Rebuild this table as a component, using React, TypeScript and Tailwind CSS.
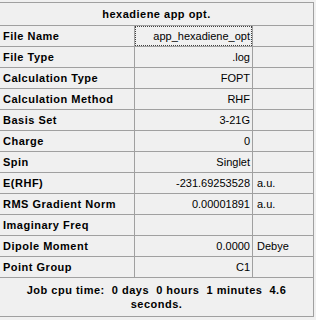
import React from "react";

const rows: { label: string; value: string; unit?: string; focus?: boolean }[] = [
  { label: "File Name", value: "app_hexadiene_opt", focus: true },
  { label: "File Type", value: ".log" },
  { label: "Calculation Type", value: "FOPT" },
  { label: "Calculation Method", value: "RHF" },
  { label: "Basis Set", value: "3-21G" },
  { label: "Charge", value: "0" },
  { label: "Spin", value: "Singlet" },
  { label: "E(RHF)", value: "-231.69253528", unit: "a.u." },
  { label: "RMS Gradient Norm", value: "0.00001891", unit: "a.u." },
  { label: "Imaginary Freq", value: "" },
  { label: "Dipole Moment", value: "0.0000", unit: "Debye" },
  { label: "Point Group", value: "C1" },
];

export default function App() {
  return (
    <div className="w-[316px] h-[320px] bg-[#f0f0f0] pt-[2px] font-['Liberation_Sans',Arial,sans-serif] text-[11px] leading-none text-black">
      <div className="w-[314px] border-t border-r border-b border-[#a0a0a0]">
        <div className="h-[23px] border-b border-[#a0a0a0] flex items-center justify-center font-bold tracking-[0.5px]">
          hexadiene app opt.
        </div>
        {rows.map((r) => (
          <div key={r.label} className="h-[21px] border-b border-[#a0a0a0] flex">
            <div className="w-[135px] border-r border-[#a0a0a0] flex items-center pl-[3px] font-bold tracking-[0.5px]">
              {r.label}
            </div>
            <div className="w-[118px] border-r border-[#a0a0a0] flex">
              {r.focus ? (
                <div className="flex-1 border border-dotted border-[#404040] flex items-center justify-end pr-[1px]">
                  {r.value}
                </div>
              ) : (
                <div className="flex-1 flex items-center justify-end pr-[2px]">{r.value}</div>
              )}
            </div>
            <div className="flex-1 flex items-center pl-[4px]">{r.unit ?? ""}</div>
          </div>
        ))}
        <div className="h-[38px] flex items-center justify-center text-center font-bold tracking-[0.5px] leading-[14px] whitespace-pre">
          {"Job cpu time:  0 days  0 hours  1 minutes  4.6\nseconds."}
        </div>
      </div>
    </div>
  );
}
